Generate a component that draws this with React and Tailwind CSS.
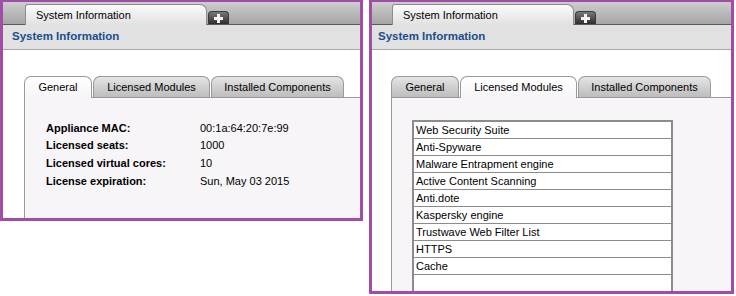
import React from "react";

const FONT = "font-['Liberation_Sans',Arial,sans-serif]";

function PlusTab() {
  return (
    <div className="ml-px w-[21px] h-[13px] rounded-t-[4px] border border-b-0 border-[#3a3a3a] bg-linear-to-b from-[#7a7a7a] to-[#2e2e2e] flex items-center justify-center">
      <svg width="9" height="9" viewBox="0 0 9 9">
        <rect x="3" y="0" width="3" height="9" fill="#f2f2f2" />
        <rect x="0" y="3" width="9" height="3" fill="#f2f2f2" />
      </svg>
    </div>
  );
}

function InnerTabs({ active }) {
  const tabs = [
    { label: "General", w: "w-[68px]" },
    { label: "Licensed Modules", w: "w-[117px]" },
    { label: "Installed Components", w: "w-[133px]" },
  ];
  return (
    <div className="flex items-end gap-px h-[21px] shrink-0">
      {tabs.map((t, i) =>
        i === active ? (
          <div
            key={t.label}
            className={`${t.w} h-[22px] -mb-px relative z-10 rounded-t-[7px] border border-b-0 border-[#9a9a9a] bg-linear-to-b from-[#ffffff] to-[#f6f4f7] flex items-center justify-center text-[11px] text-black`}
          >
            {t.label}
          </div>
        ) : (
          <div
            key={t.label}
            className={`${t.w} h-[21px] rounded-t-[7px] border border-b-0 border-[#9a9a9a] bg-linear-to-b from-[#e4e4e4] to-[#bdbdbd] flex items-center justify-center text-[11px] text-black`}
          >
            {t.label}
          </div>
        )
      )}
    </div>
  );
}

function Panel({ className, tabPad, titlePad, bodyPad, active, children }) {
  return (
    <div className={`${className} border-[3px] border-t-2 border-[#a14ca7] bg-white overflow-hidden flex flex-col shrink-0`}>
      <div className={`h-[23px] shrink-0 flex items-end border-b border-[#5a5a5a] bg-linear-to-b from-[#cdcdcd] to-[#a6a6a6] ${tabPad}`}>
        <div className="w-[182px] h-[21px] -mb-px rounded-tl-[3px] rounded-tr-[7px] border border-b-0 border-[#8c8c8c] bg-linear-to-b from-[#fbfbfb] to-[#e1e1e1] flex items-center pl-[10px] text-[11px] text-black">
          System Information
        </div>
        <PlusTab />
      </div>
      <div className={`h-[25px] shrink-0 bg-[#e1e1e1] border-b border-[#a8a8a8] flex items-center text-[11.5px] font-bold text-[#1b4d8e] ${titlePad}`}>
        System Information
      </div>
      <div className={`flex-1 min-h-0 flex flex-col pt-[26px] ${bodyPad}`}>
        <InnerTabs active={active} />
        <div className="flex-1 min-h-0 border-l border-t border-[#9a9a9a] bg-[#f7f5f8]">
          {children}
        </div>
      </div>
    </div>
  );
}

const info = [
  ["Appliance MAC:", "00:1a:64:20:7e:99"],
  ["Licensed seats:", "1000"],
  ["Licensed virtual cores:", "10"],
  ["License expiration:", "Sun, May 03 2015"],
];

const modules = [
  "Web Security Suite",
  "Anti-Spyware",
  "Malware Entrapment engine",
  "Active Content Scanning",
  "Anti.dote",
  "Kaspersky engine",
  "Trustwave Web Filter List",
  "HTTPS",
  "Cache",
];

export default function App() {
  return (
    <div className={`${FONT} w-[736px] h-[296px] bg-white flex items-start gap-[6px]`}>
      <Panel
        className="w-[363px] h-[221px]"
        tabPad="pl-[22px]"
        titlePad="pl-[9px]"
        bodyPad="pl-[21px]"
        active={0}
      >
        <div className="pt-[21px] pl-[21px] flex flex-col">
          {info.map(([k, v]) => (
            <div key={k} className="flex h-[17.7px] items-center text-[11px] text-black">
              <div className="w-[154px] font-bold">{k}</div>
              <div>{v}</div>
            </div>
          ))}
        </div>
      </Panel>
      <Panel
        className="w-[365px] h-[294px]"
        tabPad="pl-[20px]"
        titlePad="pl-[6px]"
        bodyPad="pl-[19px]"
        active={1}
      >
        <div className="pt-[22px] pl-[20px]">
          <div className="w-[261px] h-[200px] border-2 border-[#8c8c8c] bg-white flex flex-col">
            {modules.map((m) => (
              <div
                key={m}
                className="h-[17px] shrink-0 border-b border-[#8c8c8c] flex items-center pl-[2px] text-[11px] text-black"
              >
                {m}
              </div>
            ))}
          </div>
        </div>
      </Panel>
    </div>
  );
}
